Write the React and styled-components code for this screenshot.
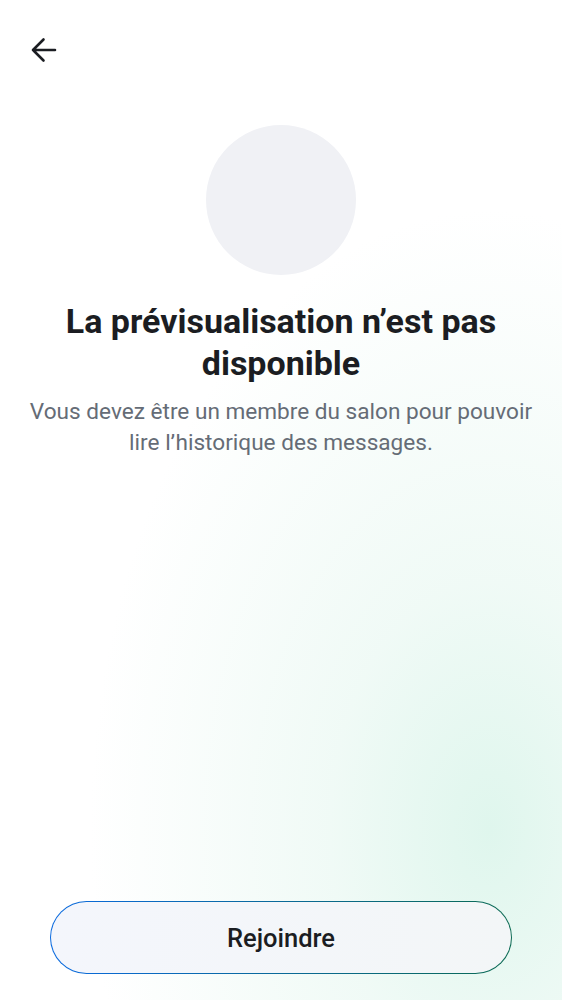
import React from 'react'
import styled, { createGlobalStyle } from 'styled-components'

const GlobalStyle = createGlobalStyle`
  html, body {
    margin: 0;
    padding: 0;
    background: #ffffff;
  }
  * { box-sizing: border-box; }
`

const Page = styled.div`
  width: 562px;
  height: 1000px;
  display: flex;
  flex-direction: column;
  font-family: Roboto, "Liberation Sans", sans-serif;
  background:
    radial-gradient(ellipse 400px 620px at 490px 830px, rgba(223, 246, 237, 1) 0%, rgba(230, 247, 240, 0.6) 40%, rgba(255, 255, 255, 0) 100%),
    #ffffff;
`

const Header = styled.div`
  display: flex;
  align-items: center;
  height: 100px;
  padding-left: 29px;
`

const BackButton = styled.button`
  display: flex;
  align-items: center;
  justify-content: center;
  width: 28px;
  height: 28px;
  padding: 0;
  border: none;
  background: transparent;
  color: #1b1d22;
`

const Content = styled.div`
  display: flex;
  flex-direction: column;
  align-items: center;
  padding: 25px 18px 0;
  flex: 1;
`

const Avatar = styled.div`
  width: 150px;
  height: 150px;
  border-radius: 50%;
  background: #f0f1f5;
`

const Title = styled.h1`
  margin: 25px 0 0;
  font-size: 34px;
  line-height: 42px;
  font-weight: 700;
  color: #1b1d22;
  text-align: center;
`

const Description = styled.p`
  margin: 12px 0 0;
  font-size: 22.6px;
  line-height: 31px;
  color: #656c76;
  text-align: center;
`

const Footer = styled.div`
  display: flex;
  padding: 0 50px 26px;
`

const JoinButton = styled.button`
  flex: 1;
  height: 73px;
  border-radius: 37px;
  border: 1.5px solid transparent;
  background:
    linear-gradient(90deg, #f4f6fc, #f3f6f7) padding-box,
    linear-gradient(90deg, #0a6ae0, #0b6a52) border-box;
  font-family: Roboto, "Liberation Sans", sans-serif;
  font-size: 25.5px;
  font-weight: 500;
  color: #1b1d22;
`

const ArrowIcon = () => (
  <svg width="28" height="28" viewBox="0 0 28 28" fill="none">
    <path d="M4 14H26M14.5 3.5L4 14l10.5 10.5" stroke="currentColor" strokeWidth="2.6" strokeLinecap="round" strokeLinejoin="round" />
  </svg>
)

const App = () => {
  return (
    <Page>
      <GlobalStyle />
      <Header>
        <BackButton aria-label="Retour">
          <ArrowIcon />
        </BackButton>
      </Header>
      <Content>
        <Avatar />
        <Title>La prévisualisation n’est pas disponible</Title>
        <Description>
          Vous devez être un membre du salon pour pouvoir lire l’historique des messages.
        </Description>
      </Content>
      <Footer>
        <JoinButton>Rejoindre</JoinButton>
      </Footer>
    </Page>
  )
}

export default App
